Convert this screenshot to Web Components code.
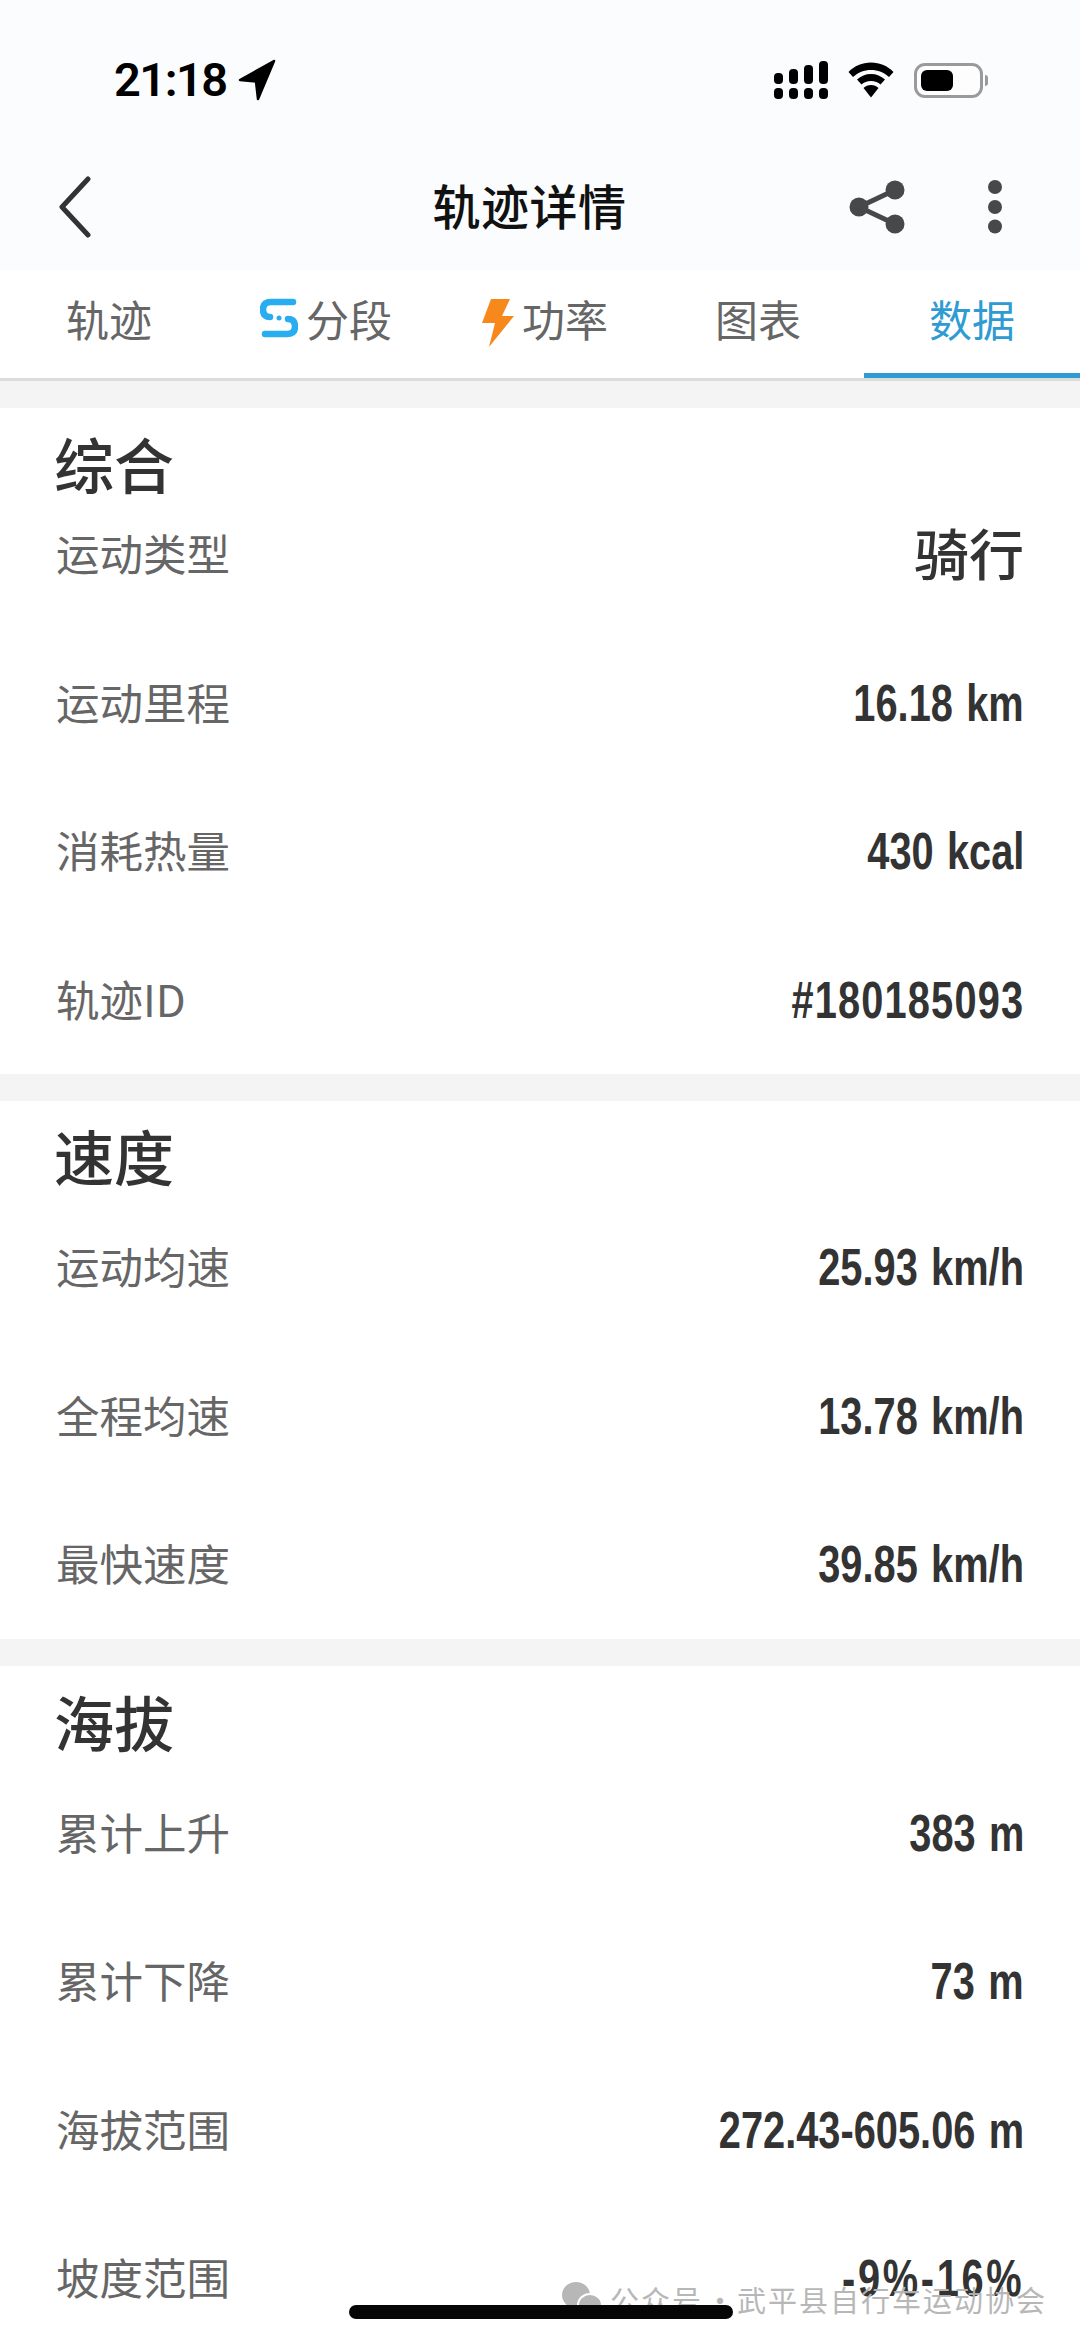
<!DOCTYPE html>
<html lang="zh"><head><meta charset="utf-8"><style>
html,body{margin:0;padding:0;background:#fff}
body{width:1080px;height:2341px;overflow:hidden;position:relative;font-family:"Noto Sans CJK SC","Liberation Sans",sans-serif}
</style></head><body>
<app-header></app-header>
<tab-bar></tab-bar>
<data-section heading="综合" top="72" pad="19">
<data-row label="运动类型" value="骑行" cjk></data-row>
<data-row label="运动里程" value="16.18 km"></data-row>
<data-row label="消耗热量" value="430 kcal"></data-row>
<data-row label="轨迹ID" value="#180185093" ls="1.500"></data-row>
</data-section>
<data-section heading="速度" top="92" pad="18">
<data-row label="运动均速" value="25.93 km/h"></data-row>
<data-row label="全程均速" value="13.78 km/h"></data-row>
<data-row label="最快速度" value="39.85 km/h"></data-row>
</data-section>
<data-section heading="海拔" top="93" pad="19">
<data-row label="累计上升" value="383 m"></data-row>
<data-row label="累计下降" value="73 m"></data-row>
<data-row label="海拔范围" value="272.43-605.06 m"></data-row>
<data-row label="坡度范围" value="-9%-16%" ls="3.500"></data-row>
</data-section>
<wm-overlay></wm-overlay>
<script>
const def=(n,html,obs)=>customElements.define(n,class extends HTMLElement{
 connectedCallback(){if(this.shadowRoot)return;const s=this.attachShadow({mode:'open'});
 s.innerHTML=typeof html==='function'?html(this):html;}
});
def('app-header',`<style>
:host{display:block;background:#fbfcfe;height:270px;color:#111}
.status{height:153px;display:flex;align-items:flex-start;justify-content:space-between;padding:56px 92px 0 114px;box-sizing:border-box}
.time{display:flex;align-items:center;gap:11px;font:600 47px/48px Roboto,"Liberation Sans",sans-serif;color:#000;letter-spacing:-1.500px}
.icons{display:flex;align-items:center;gap:20px;height:48px}
.nav{height:117px;display:flex;align-items:center;position:relative;padding:0 78px 9px 58px;box-sizing:border-box;justify-content:space-between}
.title{position:absolute;left:0;right:21px;top:21px;text-align:center;font:500 48px/60px "Noto Sans CJK SC",sans-serif;color:#111;letter-spacing:.5px}
.r{display:flex;align-items:center;gap:83px;position:relative}
svg{display:block}
</style>
<div class="status"><div class="time">21:18<svg width="38" height="42" viewBox="0 0 38 42"><path d="M36 2 2 21l16 1.500L20 40z" fill="#000" stroke="#000" stroke-width="2.500" stroke-linejoin="round"/></svg></div>
<div class="icons">
<svg width="54" height="38" viewBox="0 0 54 38" fill="#000"><rect x="0" y="12" width="9" height="11" rx="4"/><rect x="15" y="8" width="9" height="15" rx="4"/><rect x="30" y="4" width="9" height="19" rx="4"/><rect x="45" y="0" width="9" height="23" rx="4"/><rect x="0" y="27" width="9" height="11" rx="4"/><rect x="15" y="27" width="9" height="11" rx="4"/><rect x="30" y="27" width="9" height="11" rx="4"/><rect x="45" y="27" width="9" height="11" rx="4"/></svg>
<svg width="46" height="36" viewBox="0 0 46 36"><path d="M23 .5C14 .5 6.500 4 .5 10l4.500 5C10 10.500 16 8 23 8s13 2.500 18 7l4.500-5C39.500 4 32 .5 23 .5z"/><path d="M23 12c-5.500 0-10 2-14 5.500l4.500 5C16 20.500 19 19 23 19s7 1.500 9.500 3.500l4.500-5C33 14 28.500 12 23 12z"/><path d="M23 23c-3 0-5.500 1-7.500 3L23 35.500 30.500 26c-2-2-4.500-3-7.500-3z"/></svg>
<div style="display:flex;align-items:center;gap:2px"><div style="width:69px;height:35px;box-sizing:border-box;border:3px solid #9a9a9c;border-radius:11px;padding:4px;background:#fdfdfe"><div style="width:32px;background:#000;border-radius:6px;height:100%"></div></div><div style="width:3px;height:11px;background:#9a9a9c;border-radius:0 3px 3px 0"></div></div>
</div></div>
<div class="nav"><svg width="34" height="62" viewBox="0 0 34 62"><path d="M30 3 4 31l26 28" fill="none" stroke="#333" stroke-width="5" stroke-linecap="round" stroke-linejoin="round"/></svg>
<div class="title">轨迹详情</div>
<div class="r"><svg width="56" height="54" viewBox="0 0 56 54" fill="#484848"><circle cx="10" cy="27" r="9.500"/><circle cx="46" cy="10" r="9.500"/><circle cx="46" cy="44" r="9.500"/><path d="M10 27 46 10M10 27l36 17" stroke="#484848" stroke-width="5" fill="none"/></svg>
<svg width="14" height="54" viewBox="0 0 14 54" fill="#484848"><circle cx="7" cy="7" r="7"/><circle cx="7" cy="27" r="7"/><circle cx="7" cy="46.500" r="7"/></svg></div></div>`);
def('tab-bar',`<style>
:host{display:grid;grid-template-columns:repeat(5,1fr);height:108px;background:#fff;border-bottom:3px solid #dcdcdc;box-sizing:content-box;position:relative}
.t{display:flex;align-items:center;justify-content:center;gap:8px;font:400 43px/54px "Noto Sans CJK SC",sans-serif;color:#666;padding-bottom:12px;position:relative;box-sizing:border-box}
.a{color:#2f9bd3}.a:after{content:"";position:absolute;left:0;right:0;bottom:0;height:5px;background:#2f9bd3}
svg{display:block}
</style>
<div class="t" style="padding-left:2px">轨迹</div>
<div class="t" style="padding-left:4px"><svg width="38" height="40" viewBox="0 0 38 40"><path d="M33 4H11Q3 4 3 11.500T10 19" fill="none" stroke="#28aef0" stroke-width="6.500" stroke-linecap="round"/><path d="M5 36h22q8 0 8-7.500T28 21" fill="none" stroke="#28aef0" stroke-width="6.500" stroke-linecap="round"/><circle cx="19" cy="20" r="2.500" fill="#28aef0"/></svg><span>分段</span></div>
<div class="t" style="padding-left:10px"><svg width="32" height="48" viewBox="0 0 32 48" style="margin-top:10px"><path d="M9 0h19l-8 17h12L7 48l6-24H0z" fill="#f7891c"/></svg><span>功率</span></div>
<div class="t" style="padding-left:4px">图表</div>
<div class="t a">数据</div>`);
def('data-section',h=>`<style>
:host{display:block;background:#fff;border-top:27px solid #f4f4f4}
h2{margin:0;height:${h.getAttribute('top')}px;box-sizing:border-box;padding:${h.getAttribute('pad')}px 0 0 54px;font:500 60px/72px "Noto Sans CJK SC",sans-serif;color:#333}
</style><h2>${h.getAttribute('heading')}</h2><slot></slot>`);
def('data-row',h=>`<style>
:host{display:flex;align-items:center;justify-content:space-between;height:148.500px;padding:0 56px;box-sizing:border-box}
.l{font:400 43.500px/60px "Noto Sans CJK SC","Liberation Sans",sans-serif;color:#666;margin-top:-2px}
.v{display:inline-block;font:700 52px/60px "Liberation Sans",sans-serif;color:#333;white-space:nowrap;transform:scaleX(.765);transform-origin:100% 50%;word-spacing:3px}
.c{font:500 55px/60px "Noto Sans CJK SC",sans-serif;transform:none;margin-top:-6px}
</style><span class="l">${h.getAttribute('label')}</span><span class="v ${h.hasAttribute('cjk')?'c':''}" style="letter-spacing:${h.getAttribute('ls')||0}px">${h.getAttribute('value')}</span>`);
def('wm-overlay',`<style>
:host{display:block}
.w{position:absolute;left:562px;top:2279px;display:flex;align-items:center;gap:8px;font:400 29px/40px "Noto Sans CJK SC",sans-serif;color:#b4b4b4;letter-spacing:2px;white-space:nowrap;opacity:.95}
.d{display:inline-block;width:34px;text-align:center;letter-spacing:0}
.h{position:absolute;left:349px;top:2305px;width:384px;height:14px;border-radius:7px;background:#060606}
</style><div class="w"><svg width="40" height="36" viewBox="0 0 40 36" fill="#b4b4b4"><ellipse cx="14" cy="14" rx="14" ry="13"/><path d="M5 22l-2 7 8-4z"/><ellipse cx="28" cy="24" rx="12" ry="11" stroke="#fff" stroke-width="2"/></svg><span>公众号<span class="d">·</span>武平县自行车运动协会</span></div><div class="h"></div>`);
</script>
</body></html>
